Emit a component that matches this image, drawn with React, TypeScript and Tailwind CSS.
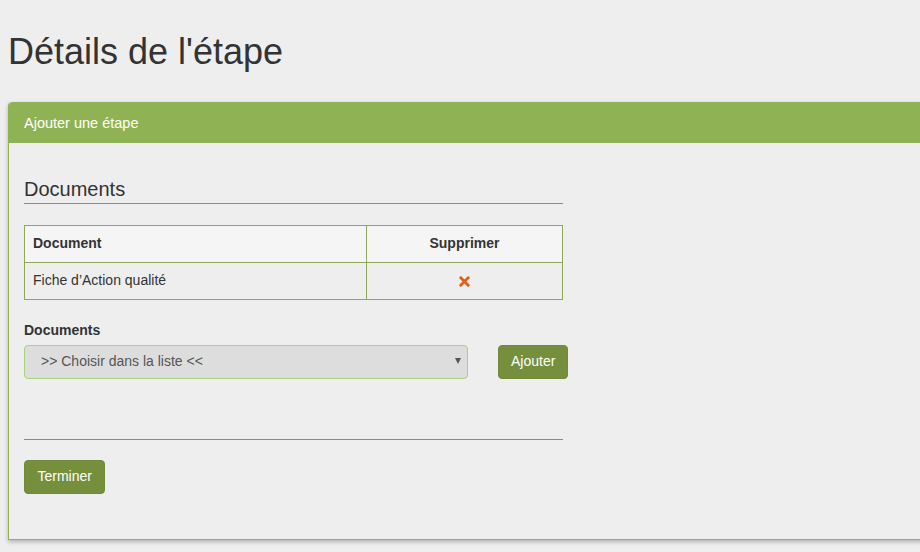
const FONT = { fontFamily: '"Liberation Sans", Arial, sans-serif' };

function RemoveIcon() {
  return (
    <svg width="11" height="11" viewBox="0 0 12 12" className="inline-block">
      <path d="M2 2 L10 10 M10 2 L2 10" stroke="#e0601a" strokeWidth="3" strokeLinecap="square" />
    </svg>
  );
}

export default function App() {
  return (
    <div className="w-[920px] h-[552px] overflow-hidden bg-[#eeeeee] text-[#333333] text-[14px]" style={FONT}>
      <div className="pl-2">
        <h1 className="pt-[32px] text-[36px] leading-[39.6px] font-normal text-[#333333]">Détails de l'étape</h1>

        {/* Panel */}
        <div className="mt-[30px] w-[940px] rounded-t-[4px] border-b border-l border-[#8fb354] shadow-[0_2px_4px_rgba(0,0,0,0.25)]">
          <div className="h-[41px] rounded-tl-[4px] bg-[#8fb354] px-[15px] pt-[11px] text-[14.5px] text-white leading-[20px]">
            Ajouter une étape
          </div>

          <div className="px-[15px] pt-[15px] pb-[45px]">
            <div className="w-[539px]">
              <h3 className="mt-[20px] pb-[3px] text-[20px] leading-[22px] border-b border-[#8a8a8a] text-[#333333]">Documents</h3>

              <table className="mt-[21px] w-full border-collapse border border-[#8ea85b] text-[14px]">
                <thead>
                  <tr className="h-[37px] bg-[#f5f5f5]">
                    <th className="w-[342px] border border-[#8ea85b] px-[8px] text-left font-bold">Document</th>
                    <th className="border border-[#8ea85b] px-[8px] text-center font-bold">Supprimer</th>
                  </tr>
                </thead>
                <tbody>
                  <tr className="h-[37px]">
                    <td className="border border-[#8ea85b] px-[8px]">Fiche d’Action qualité</td>
                    <td className="border border-[#8ea85b] px-[8px] text-center">
                      <RemoveIcon />
                    </td>
                  </tr>
                </tbody>
              </table>

              <div className="mt-[20px] font-bold text-[14px] leading-[20px]">Documents</div>
            </div>

            <div className="mt-[5px] flex items-center gap-[30px]">
              <div className="relative flex h-[34px] w-[444px] items-center rounded-[4px] border border-[#a9d27c] bg-[#dddddd] pl-[16px] text-[14px] text-[#555555]">
                &gt;&gt; Choisir dans la liste &lt;&lt;
                <span className="absolute right-[6px] top-[12px] h-0 w-0 border-x-[3.5px] border-t-[6px] border-x-transparent border-t-[#555555]" />
              </div>
              <button className="h-[34px] rounded-[4px] border border-[#6f8a38] bg-[#758f3c] px-[12px] text-[14px] text-white">
                Ajouter
              </button>
            </div>

            <div className="mt-[60px] w-[539px] border-t border-[#8a8a8a]" />

            <button className="mt-[20px] h-[34px] rounded-[4px] border border-[#6f8a38] bg-[#758f3c] px-[12.5px] text-[14px] text-white">
              Terminer
            </button>
          </div>
        </div>
      </div>
    </div>
  );
}
